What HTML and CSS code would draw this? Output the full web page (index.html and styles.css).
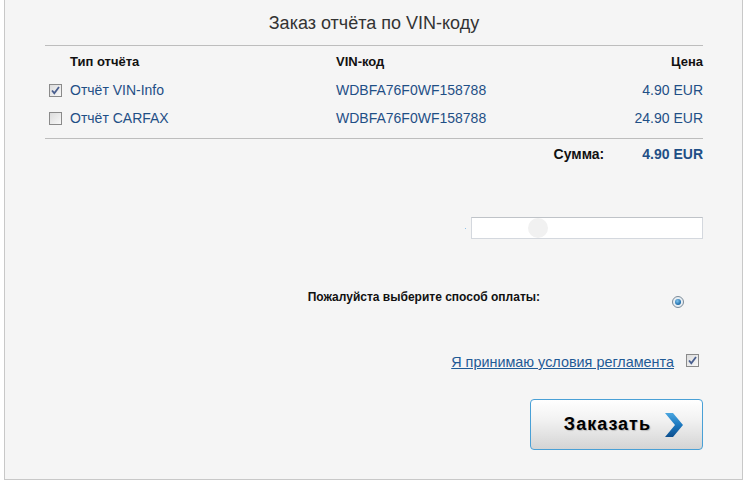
FILE: index.html
```html
<!DOCTYPE html>
<html lang="ru">
<head>
<meta charset="utf-8">
<link rel="stylesheet" href="styles.css">
</head>
<body>
<div class="panel">
  <h1 class="title">Заказ отчёта по VIN-коду</h1>
  <div class="rule"></div>
  <div class="grid">
    <div class="hd c1"></div>
    <div class="hd">Тип отчёта</div>
    <div class="hd">VIN-код</div>
    <div class="hd price">Цена</div>

    <div class="cell c1"><span class="cb checked"><svg viewBox="0 0 13 13" width="13" height="13"><path d="M3 6.5 L5.3 9.2 L10 3" fill="none" stroke="#4a5f8f" stroke-width="1.8"/></svg></span></div>
    <div class="cell link">Отчёт VIN-Info</div>
    <div class="cell link">WDBFA76F0WF158788</div>
    <div class="cell link price">4.90 EUR</div>

    <div class="cell c1"><span class="cb"></span></div>
    <div class="cell link">Отчёт CARFAX</div>
    <div class="cell link">WDBFA76F0WF158788</div>
    <div class="cell link price">24.90 EUR</div>
  </div>
  <div class="rule rule2"></div>
  <div class="sum">
    <span class="sum-label">Сумма:</span>
    <span class="sum-val">4.90 EUR</span>
  </div>
  <div class="field-row">
    <span class="dot"></span>
    <div class="field"><span class="blob"></span></div>
  </div>
  <div class="pay-row">
    <span class="pay-label">Пожалуйста выберите способ оплаты:</span>
    <span class="radio"><span class="radio-in"></span></span>
  </div>
  <div class="terms-row">
    <a class="terms" href="#">Я принимаю условия регламента</a>
    <span class="cb checked small"><svg viewBox="0 0 13 13" width="13" height="13"><path d="M3 6.5 L5.3 9.2 L10 3" fill="none" stroke="#4a5f8f" stroke-width="1.8"/></svg></span>
  </div>
  <div class="btn-row">
    <button class="order">
      <span class="order-text">Заказать</span>
      <svg class="chev" viewBox="0 0 20 24" width="20" height="24">
        <defs>
          <linearGradient id="cg" x1="0" y1="0" x2="0" y2="1">
            <stop offset="0" stop-color="#4aa6e0"/>
            <stop offset="0.5" stop-color="#1c78bf"/>
            <stop offset="1" stop-color="#0d4f8e"/>
          </linearGradient>
        </defs>
        <path d="M1 0 H9 L19 12 L9 24 H1 L11 12 Z" fill="url(#cg)"/>
      </svg>
    </button>
  </div>
</div>
</body>
</html>
```

FILE: styles.css
```css
html, body {
  margin: 0;
  padding: 0;
  background: #ffffff;
}
body {
  font-family: "Liberation Sans", Arial, sans-serif;
  font-size: 13px;
  color: #111;
}
.panel {
  box-sizing: border-box;
  margin-left: 4px;
  width: 739px;
  height: 480px;
  background: #f5f5f5;
  border: 1px solid #c8c8c8;
  border-top: none;
  padding: 0 39px 0 40px;
  display: flex;
  flex-direction: column;
}
.title {
  margin: 12px 0 0 0;
  font-size: 18px;
  line-height: 22px;
  font-weight: normal;
  text-align: center;
  color: #333;
}
.rule {
  height: 1px;
  background: #bdbdbd;
  margin-top: 11px;
}
.grid {
  display: grid;
  grid-template-columns: 25px 266px 1fr 140px;
  grid-template-rows: 30px 28px 28px;
}
.hd {
  font-weight: bold;
  color: #111;
  display: flex;
  align-items: center;
  padding-top: 1px;
}
.cell {
  display: flex;
  align-items: center;
  font-size: 14px;
}
.c1 {
  padding-left: 4px;
}
.price {
  justify-content: flex-end;
}
.link {
  color: #1f4f86;
}
.cb {
  box-sizing: border-box;
  width: 13px;
  height: 13px;
  border: 1px solid #8a8a8a;
  background: linear-gradient(135deg, #dcdcdc, #f8f8f8);
  display: inline-block;
  position: relative;
}
.cb svg {
  position: absolute;
  left: -1px;
  top: -1px;
}
.rule2 {
  margin-top: 6px;
}
.sum {
  height: 30px;
  display: flex;
  align-items: center;
  justify-content: flex-end;
  font-weight: bold;
  font-size: 14px;
}
.sum-label {
  color: #111;
  margin-right: 38px;
}
.sum-val {
  color: #1f4f86;
}
.field-row {
  margin-top: 48px;
  display: flex;
  justify-content: flex-end;
  align-items: center;
}
.dot {
  width: 1px;
  height: 1px;
  background: #8fc3ea;
  margin-right: 5px;
}
.field {
  box-sizing: border-box;
  width: 232px;
  height: 22px;
  background: #fff;
  border: 1px solid #d4d8de;
  border-top-color: #bfc3c8;
  position: relative;
}
.blob {
  position: absolute;
  left: 56px;
  top: 0px;
  width: 20px;
  height: 20px;
  border-radius: 50%;
  background: #f1f1f1;
}
.pay-row {
  margin-top: 55px;
  display: flex;
  justify-content: flex-end;
  align-items: center;
  padding-right: 19px;
}
.pay-label {
  font-size: 12px;
  font-weight: bold;
  color: #111;
  margin-right: 132px;
  position: relative;
  top: -4px;
}
.radio {
  box-sizing: border-box;
  width: 12px;
  height: 12px;
  border-radius: 50%;
  border: 1px solid #7a8a98;
  background: #e8eef3;
  display: flex;
  align-items: center;
  justify-content: center;
  position: relative;
  top: 1px;
}
.radio-in {
  width: 6px;
  height: 6px;
  border-radius: 50%;
  background: radial-gradient(circle at 40% 35%, #7fc4ef, #1c6aa8 70%, #0f3f6e);
}
.terms-row {
  margin-top: 44px;
  display: flex;
  justify-content: flex-end;
  align-items: center;
  padding-right: 4px;
}
.terms {
  color: #1f5a96;
  font-size: 14.4px;
  text-decoration: underline;
  margin-right: 12px;
  position: relative;
  top: 2px;
}
.btn-row {
  margin-top: 31px;
  display: flex;
  justify-content: flex-end;
}
.order {
  box-sizing: border-box;
  width: 173px;
  height: 51px;
  border: 1px solid #49a0d6;
  border-radius: 4px;
  background: linear-gradient(#ffffff 0%, #f2f2f2 40%, #d4d4d4 100%);
  display: flex;
  align-items: center;
  justify-content: flex-end;
  padding: 0 18px 0 0;
  font-family: "Liberation Sans", Arial, sans-serif;
  cursor: pointer;
}
.order-text {
  font-size: 18px;
  font-weight: bold;
  color: #000;
  letter-spacing: 1px;
  text-shadow: 1px 1px 1px #bbb;
  margin-right: 13px;
}
.chev {
  display: block;
}
```
